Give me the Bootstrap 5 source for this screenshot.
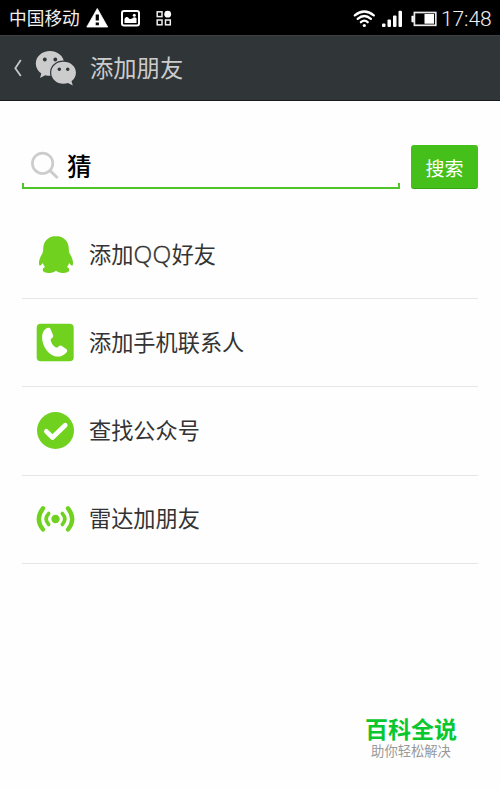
<!DOCTYPE html>
<html lang="zh-CN">
<head>
<meta charset="utf-8">
<meta name="viewport" content="width=device-width, initial-scale=1">
<title>添加朋友</title>
<link href="https://cdn.jsdelivr.net/npm/bootstrap@5.3.0/dist/css/bootstrap.min.css" rel="stylesheet">
<style>
body{font-family:"Noto Sans CJK SC",sans-serif;color:#333;background:#fefefe;height:790px;overflow:hidden}
svg{display:block;flex:none}
.status-bar{height:35px;background:#000;color:#f0f0f0;padding-left:9px;padding-right:8px}
.carrier{font-size:17.7px;line-height:34px;width:77px;white-space:nowrap;padding-bottom:2px}
.clock{font-family:Roboto,sans-serif;font-weight:300;font-size:21px;line-height:33px;padding-top:3px;width:51px;letter-spacing:-.1px;white-space:nowrap}
.title-bar{height:66px;background:#303538;border-top:1px solid #3b4043;border-bottom:1px solid #171c20;color:#ccc;padding-left:10px}
.title-text{font-size:23.3px;line-height:62px;padding-bottom:2px;margin-left:10px}
.page-body{padding:44px 22px 0}
.search-row{height:44px;gap:11px}
.search-field{position:relative;border-bottom:2px solid #50c52b;color:#000;font-size:24.5px;line-height:39px;padding-left:5px}
.search-field::before,.search-field::after{content:"";position:absolute;bottom:0;width:2px;height:4px;background:#50c52b}
.search-field::before{left:0}
.search-field::after{right:0}
.search-word{margin-left:7px;font-weight:500;padding-bottom:2px}
.search-btn{width:67px;height:44px;background:#45c01a;border:0;border-bottom:1px solid #37a514;border-radius:3px;color:#fff;font-size:19px;line-height:44px;padding:1px 0 0}
.search-btn:hover{background:#45c01a;color:#fff}
.options{margin-top:22px}
.option{height:88.2px;border:0;border-bottom:1px solid #e6e6e6;background:none;color:#333;font-size:22.2px;line-height:30px;padding:0 0 0 12px;gap:13px}
.option-label{padding-bottom:4px}
.latin{font-family:"Open Sans",sans-serif;font-weight:300;font-size:24.5px;line-height:1;letter-spacing:.4px;-webkit-text-stroke:.4px #333}
.brand-mark{margin:147px 16px 0 0;width:102px;line-height:1}
.brand-name{color:#0ac72f;font-size:23px;font-weight:700;line-height:34px}
.brand-line{color:#999;font-size:13.3px;line-height:16px;margin-top:-2px}
</style>
</head>
<body>
<div class="status-bar d-flex align-items-center">
  <span class="carrier">中国移动</span>
  <svg width="90" height="34" viewBox="86 0 90 34">
    <path d="M97.300 7.500 L107.700 26 H86.800Z" fill="#fff" stroke="#fff" stroke-width=".8" stroke-linejoin="round"/>
    <path d="M95.700 13.500h3.200v6h-3.200zM95.700 21.500h3.200v2.800h-3.200z" fill="#000"/>
    <rect x="122" y="10" width="17" height="14.500" rx="2" fill="none" stroke="#fff" stroke-width="2"/>
    <path d="M124.500 22v-4c1.200-2.500 3-2.500 4.500-.6 1.300 1.200 2.400.6 3.500-.2 1.600-1.200 2.500-1.200 4 0V22z" fill="#fff"/><circle cx="134.300" cy="14.300" r="1.500" fill="#fff"/>
    <g fill="none" stroke="#eee" stroke-width="1.500"><rect x="157.200" y="10.800" width="4.800" height="4.800"/><rect x="157.200" y="19" width="4.800" height="4.800"/><rect x="165.500" y="19" width="4.800" height="4.800"/></g>
    <circle cx="167.700" cy="13.200" r="3.400" fill="#fff"/>
  </svg>
  <svg class="ms-auto" width="88" height="34" viewBox="353 0 88 34">
    <g fill="none" stroke="#fff" stroke-width="2.300" stroke-linecap="round"><path d="M354.800 14.400Q364.300 6.600 373.800 14.400"/><path d="M357.700 17.900Q364.300 12.200 370.900 17.900"/><path d="M360.900 21.200Q364.300 18.100 367.700 21.200"/></g>
    <circle cx="364.300" cy="24.500" r="1.600" fill="#fff"/>
    <g fill="#fff"><rect x="382" y="22.500" width="3.500" height="3.500" rx="1"/><rect x="387.500" y="18.500" width="3.500" height="7.500" rx="1"/><rect x="393" y="14.500" width="3.500" height="11.500" rx="1"/><rect x="398.500" y="9.800" width="3.500" height="16.200" rx="1"/></g>
    <rect x="414.400" y="11.500" width="21.400" height="12.800" fill="none" stroke="#e9e9e9" stroke-width="1.700"/><rect x="424.500" y="13" width="9.500" height="9.700" fill="#fff"/><path d="M413.500 15h-1.700v6h1.700z" fill="#fff" stroke="#fff" stroke-width=".6"/>
  </svg>
  <span class="clock">17:48</span>
</div>
<header class="title-bar d-flex align-items-center">
  <svg width="70" height="64" viewBox="10 36 70 64">
    <path d="M20.800 60L15.300 68.200L20.800 76" fill="none" stroke="#c4c7c8" stroke-width="1.800"/>
    <path d="M50 51c-8 0-14.200 5.500-14.200 12.500 0 4 2 7.500 5.500 9.900L40 78l5.200-2.800c1.600.4 3.100.6 4.800.6 8 0 14.200-5.400 14.200-12.300S58 51 50 51z" fill="#ccc"/>
    <path d="M63.500 61.800c-7 0-12.300 4.800-12.300 10.900s5.300 11 12.300 11c1.600 0 3.100-.2 4.500-.7l4.800 2.400-1.300-4.200c2.800-2 4.400-5.100 4.400-8.500 0-6.100-5.300-10.900-12.400-10.900z" fill="#ccc" stroke="#303538" stroke-width="2.400" paint-order="stroke"/>
    <g fill="#303538"><circle cx="44.800" cy="59.500" r="1.900"/><circle cx="55.300" cy="59.500" r="1.900"/><circle cx="59.300" cy="69.300" r="1.700"/><circle cx="67.700" cy="69.300" r="1.700"/></g>
  </svg>
  <span class="title-text">添加朋友</span>
</header>
<main class="page-body">
  <div class="search-row d-flex">
    <div class="search-field flex-grow-1 d-flex align-items-center">
      <svg width="33" height="38" viewBox="27 146 33 38"><circle cx="42.600" cy="162.300" r="10.200" fill="none" stroke="#ccc" stroke-width="2.700"/><path d="M50.200 169.700L57.600 177" stroke="#ccc" stroke-width="3"/></svg>
      <span class="search-word">猜</span>
    </div>
    <button type="button" class="btn search-btn">搜索</button>
  </div>
  <div class="options list-group rounded-0">
    <a class="option list-group-item rounded-0 d-flex align-items-center">
      <svg width="42" height="42" viewBox="34 233 42 42"><path d="M56 235c-7.800 0-12.800 5.500-12.800 13 0 2-.3 3.500-1.300 5.300-1.800 3-2.900 6-2.900 8.700 0 1.700.3 2.600.9 2.600.8 0 2-1.200 3-2.600.4 1.500 1.100 2.900 2.200 4-1.500.6-2.400 1.600-2.400 2.700 0 2.100 3 3.300 6.700 3.300 3 0 5.200-1.100 6.600-2.300 1.400 1.200 3.600 2.300 6.600 2.300 3.700 0 6.700-1.200 6.700-3.300 0-1.100-.9-2.100-2.400-2.700 1.100-1.100 1.800-2.500 2.200-4 1 1.400 2.200 2.600 3 2.600.6 0 .9-.9.900-2.600 0-2.700-1.100-5.700-2.900-8.700-1-1.800-1.300-3.300-1.300-5.300 0-7.500-5-13-12.800-13z" fill="#70d11f"/></svg>
      <span class="option-label">添加<span class="latin">QQ</span>好友</span>
    </a>
    <a class="option list-group-item rounded-0 d-flex align-items-center">
      <svg width="42" height="42" viewBox="34 321.700 42 42"><rect x="36.700" y="323.500" width="37" height="37.500" rx="4" fill="#70d11f"/><path d="M45.500 328.800c2.300-1.900 4.200-1.900 5 0l2.500 5.800c.6 1.400.1 2.400-1.200 3.300-1.100.8-1.300 1.600-.9 3 .9 2.600 2.400 4.600 4.500 6 1.100.7 1.900.5 2.900-.5 1.200-1.300 2.300-1.500 3.600-.6l4.300 3c1.400 1 1.400 2.200.1 3.600-2.600 2.900-6.600 4.500-10.600 3.700-7.600-1.600-13.600-10.300-13.600-18.900 0-3.600 1.100-6.500 3.400-8.400z" fill="#fff"/></svg>
      <span class="option-label">添加手机联系人</span>
    </a>
    <a class="option list-group-item rounded-0 d-flex align-items-center">
      <svg width="42" height="42" viewBox="34 410 42 42"><circle cx="55.500" cy="430.500" r="18.500" fill="#70d11f"/><path d="M46.300 431.300L52.500 437.500L65.200 425.200" fill="none" stroke="#fff" stroke-width="4.700" stroke-linecap="round" stroke-linejoin="round"/></svg>
      <span class="option-label">查找公众号</span>
    </a>
    <a class="option list-group-item rounded-0 d-flex align-items-center">
      <svg width="42" height="42" viewBox="34 498 42 42"><circle cx="55.500" cy="519" r="4.200" fill="#70d11f"/><g fill="none" stroke="#70d11f" stroke-linecap="round"><path d="M48.700 513.500Q43.600 519 48.700 524.500M62.300 513.500Q67.400 519 62.300 524.500" stroke-width="3.600"/><path d="M43 508.300Q34.600 519 43 529.500M68 508.300Q76.400 519 68 529.500" stroke-width="4.300"/></g></svg>
      <span class="option-label">雷达加朋友</span>
    </a>
  </div>
  <div class="brand-mark ms-auto text-center">
    <div class="brand-name">百科全说</div>
    <div class="brand-line">助你轻松解决</div>
  </div>
</main>
<script src="https://cdn.jsdelivr.net/npm/bootstrap@5.3.0/dist/js/bootstrap.bundle.min.js"></script>
</body>
</html>
